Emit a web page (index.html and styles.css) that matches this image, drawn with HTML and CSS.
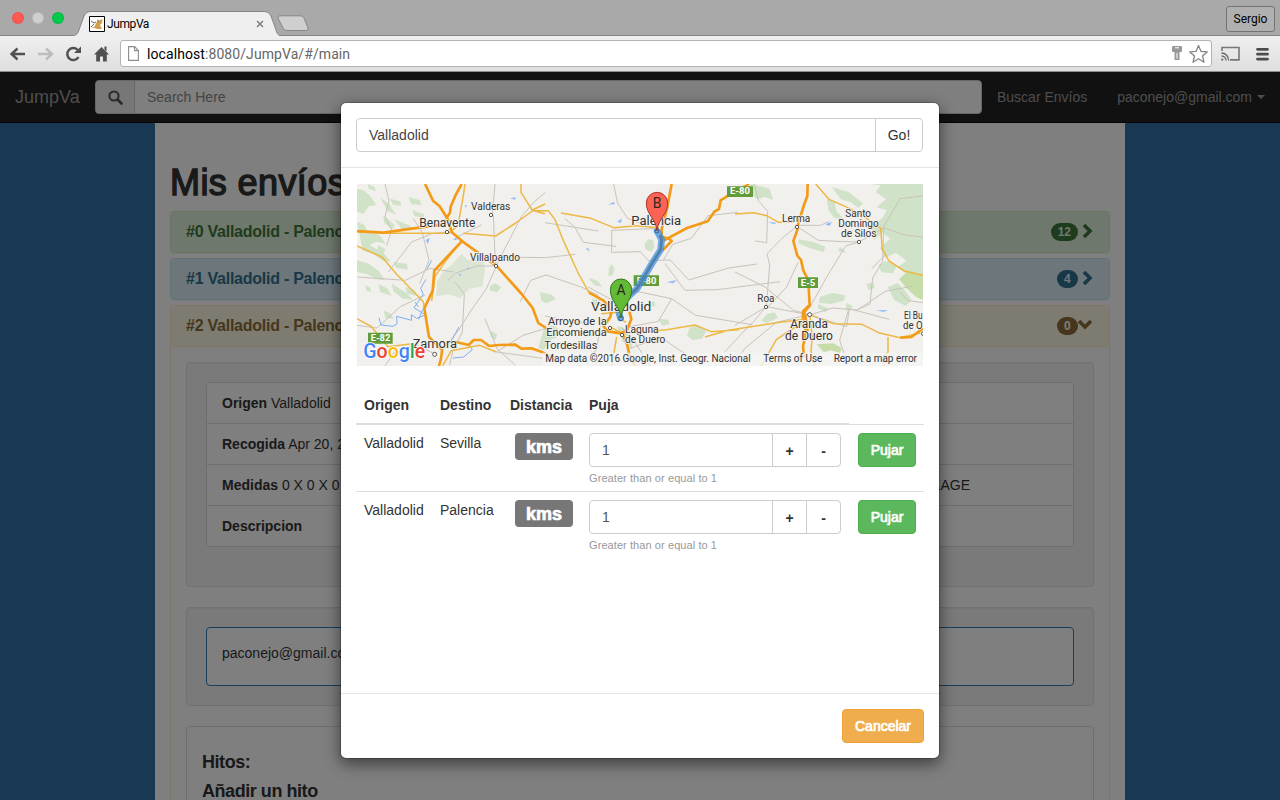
FILE: index.html
```html
<!DOCTYPE html>
<html lang="es">
<head>
<meta charset="utf-8">
<title>JumpVa</title>
<link rel="stylesheet" href="styles.css">
</head>
<body>
<header class="browser">
  <div class="tabstrip">
    <div class="lights"><i class="red"></i><i class="gray"></i><i class="green"></i></div>
    <div class="tab">
      <svg class="tab-shape" width="208" height="25" viewBox="0 0 208 25"><path d="M0 25C4 24 5 22 6 19L11 5Q13 .5 17 .5H192Q196 .5 198 5L203 19C204 23 205 24 208 25" fill="#efefef" stroke="#858585"/></svg>
      <div class="tab-content">
        <svg width="16" height="16" viewBox="0 0 16 16"><path fill="#fff" stroke="#000" d="M.5.5h15v15H.5z"/><path d="M3 12l3-2 1-3 1-1V3l2 1.500 3.500-1.500-.5 4-2 2 2 4H8l-2-1z" fill="#d2a04a"/><path d="M2 5l3 2 2-1M2 11l3-3M9 5.500h1" stroke="#69675c" fill="none"/></svg>
        <span>JumpVa</span>
        <svg class="close" width="8" height="8" viewBox="0 0 8 8"><path d="M1 1l6 6M7 1L1 7" stroke="#777" stroke-width="1.4"/></svg>
      </div>
    </div>
    <svg class="newtab" width="34" height="17" viewBox="0 0 34 17"><path d="M4 .8H24Q27 .8 28 3L32 13Q33 15.500 30 15.500H11Q8 15.500 7 13L2 3Q1.500 .8 4 .8z" fill="#cfcfcf" stroke="#878787"/></svg>
    <span class="user">Sergio</span>
  </div>
  <div class="toolbar">
    <svg class="tools" width="112" height="34" viewBox="0 0 112 34" fill="none">
      <path d="M25 17H12M17.500 11.500L11.500 17l6 5.500" stroke="#505050" stroke-width="2.400"/>
      <path d="M38 17h13M46 11.500l6 5.500-6 5.500" stroke="#bcbcbc" stroke-width="2.400"/>
      <path d="M78.500 20A6 6 0 1 1 77.500 12.800" stroke="#505050" stroke-width="2.500"/><path d="M81 9.500v6.500h-7z" fill="#505050"/>
      <path d="M94 17.500l7.500-7.500 7.500 7.500h-2.200v7h-3.800v-5h-3v5h-3.800v-7zM104.500 9.500h2v5l-2-2z" fill="#505050"/>
    </svg>
    <div class="address">
      <svg width="11" height="15" viewBox="0 0 11 15"><path d="M.6.6h6L10.400 4.500v9.900H.6zM6.500.6v4h3.900" fill="#fff" stroke="#8b8b8b" stroke-width="1.100"/></svg>
      <span class="url"><b>localhost</b>:8080/JumpVa/#/main</span>
      <svg class="right-icons" width="40" height="22" viewBox="0 0 40 22"><path d="M2 3h8q1 0 1 1v4q0 1-1 1H8.500v8h-5V9H2q-1 0-1-1V4q0-1 1-1z" fill="#999"/><path d="M4 4.800h4M6 10v5.500" stroke="#fff"/><path d="M27.500 2.500l2.500 5.900 6.200.5-4.700 4.100 1.500 6.200-5.500-3.400-5.500 3.400 1.500-6.200-4.700-4.100 6.200-.5z" fill="#fff" stroke="#858585" stroke-width="1.300" stroke-linejoin="round"/></svg>
    </div>
    <svg class="menu-icons" width="50" height="22" viewBox="0 0 50 22" fill="none"><path d="M2 8V4.500h17v12.400h-9" stroke="#777" stroke-width="1.600"/><path d="M1.500 10a7 7 0 0 1 7 7.500M1.500 13a4.500 4.500 0 0 1 4.500 4.500" stroke="#666" stroke-width="1.300"/><circle cx="2.300" cy="16.600" r="1.100" fill="#666"/><path d="M37.500 6.300h10M37.500 11.200h10M37.500 16.100h10" stroke="#4d4d4d" stroke-width="2.800" stroke-linecap="round"/></svg>
  </div>
</header>
<div class="viewport">
  <nav class="navbar">
    <span class="brand">JumpVa</span>
    <div class="search"><span class="addon"><svg width="15" height="15" viewBox="0 0 15 15" fill="none"><circle cx="6" cy="6" r="4.600" stroke="#555" stroke-width="2"/><path d="M9.500 9.500l4 4" stroke="#555" stroke-width="2.600" stroke-linecap="round"/></svg></span><span class="ph">Search Here</span></div>
    <span class="link1">Buscar Envíos</span>
    <span class="link2">paconejo@gmail.com<i class="caret"></i></span>
  </nav>
  <main class="container">
    <h1>Mis envíos</h1>
    <section class="panel success"><div class="heading"><span>#0 Valladolid - Palencia</span><span class="badge">12</span><svg width="14" height="14" viewBox="0 0 14 14"><path d="M3 1l6 6-6 6" fill="none" stroke="currentColor" stroke-width="3.600"/></svg></div></section>
    <section class="panel info"><div class="heading"><span>#1 Valladolid - Palencia</span><span class="badge">4</span><svg width="14" height="14" viewBox="0 0 14 14"><path d="M3 1l6 6-6 6" fill="none" stroke="currentColor" stroke-width="3.600"/></svg></div></section>
    <section class="panel warning">
      <div class="heading"><span>#2 Valladolid - Palencia</span><span class="badge flush">0</span><svg width="14" height="14" viewBox="0 0 14 14"><path d="M1 3l6 6 6-6" fill="none" stroke="currentColor" stroke-width="3.600"/></svg></div>
      <div class="panel-body">
        <div class="well first">
          <div class="list">
            <div><b>Origen</b> Valladolid</div>
            <div><b>Recogida</b> Apr 20, 2016</div>
            <div class="split"><span><b>Medidas</b> 0 X 0 X 0</span><span class="kind">PACKAGE</span></div>
            <div><b>Descripcion</b></div>
          </div>
        </div>
        <div class="well"><div class="mail">paconejo@gmail.com</div></div>
        <div class="hitos"><h4>Hitos:</h4><h4>Añadir un hito</h4></div>
      </div>
    </section>
  </main>
  <div class="backdrop"></div>
  <div class="modal">
    <div class="modal-header"><div class="group"><span class="field">Valladolid</span><span class="go">Go!</span></div></div>
    <div class="modal-body">
      <svg class="map" width="566" height="182" viewBox="6 6 1698 546">
        <path fill="#f1f0ed" d="M6 6h1698v546H6z"/>
        <g fill="#d0e2c7">
          <path d="M6 20l20 5 22 20 15 25-22 3-15 22-20-5zM6 120l22 8 10 20 35 12 20 25-30-6-20 10 40 22 25 28-28-4-22-18-35-12zM6 235l35 10 30 22 20 28-25-3-30-16-30-6zM38 6l20 8 5 14-22-8zM75 45l30 25 18 28-25-10zM105 50l30 8 4 14-25-4zM85 100l35 30-8 12-25-20zM118 112l45 18 12 14-35-3zM115 240l40 5 4 18-35-5zM70 305l28 15 12 22-34-12zM110 305l45 28 18 20-30-3-28-22zM150 315l28 10 12 18-32-8zM30 310l15 6 4 14-15-5zM85 385l20 8 12 18-25-4zM160 45l35 10 5 14-30-2zM172 85l35 12-2 12-28-8zM70 190l20 10-3 14-20-10z"/>
          <path d="M320 215l18 20 46-8 6 34-8 52-40 8-26 28-36-12-36 6 2-44 22-34 22-16z" fill="#dce4d3"/>
          <path d="M405 312l16-8 18 12-12 14-22-4zM555 330l35 8 12 14-28 12-15-8zM408 447l18 10-4 18-16-12z"/>
          <path d="M880 172l14 2 4 18-8 18-18-8-4-16zM700 288l28 8 14 18-24-4zM762 257l8-10 8 12-4 20-14 4zM778 295l18-3 14 16-18 24-12-12zM710 350l24 4 12 14-28 2zM845 285l20 5 14 14-26-2zM880 365l18-8 4 14-16 4zM565 445l25-15 20 8-4 28-28 10-10 28-18-5zM1005 435l25-5 24 18-14 22-28 4-16-14zM910 410l30 3 4 14-22 4zM785 432l20 6 30 40-6 24-28-25-4-22z"/>
          <path d="M1190 6l54 14 10 34-25-10-22 9-18-20-25-4 5-12zM1415 50l24 12 6 26 25 30-34-12-15-22zM1330 172l45 8 36 14-5 16-44-13-30-12zM1456 195l18 18-25-6zM1395 345l36-12 40 6-5 17-40 10-34-4zM1390 367l30 12-8 12-24-12zM1237 395l22-4 10 16-34 16-16-7zM1475 362l20 12-24 12z"/>
          <path d="M1548 6h156v300l-20-25-28-5-28-20 26-20-32-24-30 16-17-30 30-28-22-18-26 22-6-38 34-32 10-20-30-8 28-24-30-22 14-20zM1570 250l24-14 30 18-10 20-34-3zM1598 315l30-12 24 26 18 25-18 18-34-18z"/>
          <path d="M1430 15l50 15 44 34-14 14-24-18-28-8zM1535 305l20-3 5 15-20 8z"/>
          <path fill="#c6dda9" d="M1632 292l25-24 47 12v74l-20-8-30-28z"/><path fill="#c6dda9" d="M1385 487l50-3 25 15-5 14-28-8-20 6z"/>
        </g>
        <g stroke="#c9c3bb" stroke-width="3" fill="none" stroke-linejoin="round">
          <path d="M90 6l12 50-12 48 20 40-15 47M6 285l145 10 75-36 70 11M175 110l27 42 20 83-28 70M100 270l70-90 60-25 45-5M415 100l6 148M420 6l-8 88M425 252l-60 0-65 22-22 22M300 300l28 36-6 114-28 56-10 44M425 252l-32 70-44 62-38 60-42 55M240 516l-60-28-60 20-30 44M390 410l36 90 55 50M424 510l80-50 66-20M425 510l146 20M495 360l32-65 46-16M425 225l145 2M425 248l74-144 40-46 32-26M380 128l-76 38M6 430l60 8 70-64 74-35"/>
          <path d="M571 278l110 38 49 24M571 227l90-10M630 110l30 26 25 45 98 12M776 6l12 58 30 45 80 32M570 122l160 25M770 211l86-2 25 27 65-2 55 60 120-36 86-12M770 211v-66l125-5M925 235l28-48 56-18 50-68 90-10M930 245l60 80 96-2 190-24M740 410l-15 90-30 50M570 402l80 16 66 7M800 435l36 40 50 76M825 500l90-35 130 87M700 315l88 48M830 325l120 25 72 50 170 28M950 350l-40 68-92 17"/>
          <path d="M1198 6l12 50 28 32-3 94-34-5M1325 133l-44 36-45 46 8 34-10 124-40 48-30 30-56 60M1325 133l65 42 76 4 46 1 75-42 60 20 60 8M1512 180l-40 12-58 95-50 90M1330 240l-36 76-56 60M1235 374l130 25 66-21 76 6 84-56 80-15M1140 270l90 45 85 70 49 13M1140 430l95-56M1364 398l-100 23-94 78-36 51M1586 138l-3 100-30 50-8 78-40 18M1480 385l-26 90 20 60M1590 220l-40 40M1582 140l54-90 68-8M1634 330l26 26 44 6M1325 130h72l25-12M1365 399l110 35 8-54 120 32"/>
        </g>
        <g fill="none" stroke="#7faff5" stroke-width="3"><path d="M213 292l-16 27 8 18-28 40 34 22-26 10-16-11 1 17-45-12 1 23-12 7-36-4-6-22M230 235l-14 26M312 435l-24 42-16 15M338 485l14 18-26 22-32 3M180 360l10 15M203 382l-12 30"/></g>
        <g fill="#91baff"><path d="M212 174l12-6-5 18zM293 172l14-6-3 9zM330 68l6 3-4 7zM310 275l10 3-6 5zM336 258l8-1-5 7zM465 49l18-3-3 7zM692 200l8-2 4 10zM760 68l16-9 4 7zM787 118l14-8-4 14zM935 301l30-7-10 10zM1240 120l25 2-8 5zM1410 127l20-8-6 13zM1564 384l35 1-14 5z"/></g>
        <g fill="none" stroke="#edb844" stroke-width="4.500" stroke-linejoin="round">
          <path d="M6 150l95 4 180 0 28-24 16-90 5-34M6 192l75 33 44 52 80 82 3 20M325 154l97 8 60-39 50-36M498 6v25l34 54 38 10M532 84l38-18M6 410l42 23 51 61 67-8M424 510l-50-20-85 16-26 45M320 178l-45 55-35 50-10 74M532 86l48 0 20 27 26 65 45 98 31 56M618 93l90 16 68 28 66-6 70 6M765 435l40 20 130-12 84-14 50 20 82-6M739 395l60-5M785 465l-15 87M1050 465l70-20 160-25 71-8M813 421l-20-12-12-20"/>
          <path d="M1140 96l55-4 40 9 36 20h46M1382 6l40 46 50 22 48 25 57 40 5 62 20 36 46 30 56 13M1370 400l65 25 86 2 50 25 64 15 60-14M1599 465v46l-12 10v31M1358 415l-50 28-44 30-45 79M1364 398l8 68-4 40 10 46"/>
        </g>
        <g fill="none" stroke="#f39b18" stroke-width="8" stroke-linejoin="round">
          <path d="M6 147l80 5 90-13 76-10 27-19M210 6l24 50 20 17 24 38 12 39 32 28 104 75 74 83 33 42 17 45 34 22M320 6l-17 31-16 37-2 18-12 18M320 178l-82 88-5 60-25 53 14 86 38 37M303 480l38 9 15-15 22 0 25 18 28-3 50-1 18 12 30-1 34 12 30 15M262 500l-4 30-6 22"/>
          <path d="M950 6l-13 70-17 65 0 24 22 5 8 7-27 28M926 176l70-38 62-20 20-29 14-8 5-26 53-34 25-10 13-15M702 332l44 24 24 29-4 20-20 28 12 15 40 6 18-10 13-33-6-22M800 452l15 30 8 35 18 35"/>
          <path d="M1358 6l-1 36-10 27-18 58-3 20-11 30 12 44 11 13 7 31 15 30 4 76-17 20 5 15-2 61-6 25 3 34"/><path d="M1362 370l-18 18v20l11 19 3 20M1704 440l-35 25-33 2"/>
        </g>
        <g fill="#609d3a"><path d="M39 452h74v33H39zM836 280h76v32h-76zM1116 13h78v32h-78zM1329 286h60v32h-60z"/></g>
        <g fill="#fff" font-size="25" font-weight="700"><text x="47" y="478" textLength="59" lengthAdjust="spacingAndGlyphs">E-82</text><text x="845" y="305" textLength="59" lengthAdjust="spacingAndGlyphs">E-80</text><text x="1125" y="37" textLength="60" lengthAdjust="spacingAndGlyphs">E-80</text><text x="1337" y="311" textLength="44" lengthAdjust="spacingAndGlyphs">E-5</text></g>
        <path d="M906 147l14 25-3 31-27 43-43 73-26 24-24 20-6 24 5 21" fill="none" stroke="#3c8ee0" stroke-opacity=".72" stroke-width="20" stroke-linejoin="round" stroke-linecap="round"/>
        <path d="M914 160l6 12-3 31-27 43-43 73-26 24" fill="none" stroke="#547fab" stroke-width="8" stroke-linejoin="round"/>
        <g fill="#fff" stroke="#555" stroke-width="3"><circle cx="276" cy="150" r="5"/><circle cx="408" cy="99" r="5"/><circle cx="423" cy="252" r="5"/><circle cx="239" cy="517" r="6"/><circle cx="906" cy="147" r="6" fill="#6da9e5" stroke="#315f9a"/><circle cx="798" cy="409" r="7" fill="#6da9e5" stroke="#315f9a"/><circle cx="765" cy="438" r="5"/><circle cx="801" cy="459" r="5"/><circle cx="1326" cy="135" r="5"/><circle cx="1512" cy="180" r="5"/><circle cx="1233" cy="375" r="5"/><circle cx="1364" cy="398" r="6"/><circle cx="1704" cy="455" r="5"/></g>
        <g class="places">
          <text x="193" y="135" font-size="36" textLength="168" lengthAdjust="spacingAndGlyphs">Benavente</text><text x="348" y="83" textLength="118" lengthAdjust="spacingAndGlyphs">Valderas</text><text x="345" y="237" textLength="150" lengthAdjust="spacingAndGlyphs">Villalpando</text><text x="173" y="498" font-size="36" textLength="133" lengthAdjust="spacingAndGlyphs">Zamora</text>
          <text x="829" y="130" font-size="38" textLength="149" lengthAdjust="spacingAndGlyphs">Palencia</text><text x="708" y="388" font-size="38" textLength="181" lengthAdjust="spacingAndGlyphs">Valladolid</text><text x="579" y="430" textLength="176" lengthAdjust="spacingAndGlyphs">Arroyo de la</text><text x="574" y="463" textLength="181" lengthAdjust="spacingAndGlyphs">Encomienda</text><text x="568" y="502" textLength="159" lengthAdjust="spacingAndGlyphs">Tordesillas</text><text x="810" y="453" textLength="101" lengthAdjust="spacingAndGlyphs">Laguna</text><text x="810" y="483" textLength="121" lengthAdjust="spacingAndGlyphs">de Duero</text>
          <text x="1281" y="120" textLength="85" lengthAdjust="spacingAndGlyphs">Lerma</text><text x="1471" y="105" textLength="77" lengthAdjust="spacingAndGlyphs">Santo</text><text x="1450" y="136" textLength="121" lengthAdjust="spacingAndGlyphs">Domingo</text><text x="1458" y="166" textLength="106" lengthAdjust="spacingAndGlyphs">de Silos</text><text x="1207" y="361" textLength="51" lengthAdjust="spacingAndGlyphs">Roa</text><text x="1306" y="438" font-size="36" textLength="113" lengthAdjust="spacingAndGlyphs">Aranda</text><text x="1290" y="474" font-size="36" textLength="144" lengthAdjust="spacingAndGlyphs">de Duero</text><text x="1647" y="411" textLength="56" lengthAdjust="spacingAndGlyphs">El Bu</text><text x="1644" y="441" textLength="59" lengthAdjust="spacingAndGlyphs">de O</text>
        </g>
        <g stroke-width="3"><path d="M906 147C903 109 874 99 874 63a32 32 0 0 1 64 0C938 99 909 109 906 147z" fill="#fb6355" stroke="#a9372c"/><path d="M798 408C795 371 766 360 766 323a32 32 0 0 1 64 0C830 360 801 371 798 408z" fill="#62ba35" stroke="#397721"/></g>
        <g fill="#30291f" font-size="42" text-anchor="middle"><text x="906" y="78">B</text><text x="798" y="338">A</text></g>
        <path d="M562 512h1142v40H562z" fill="#f5f5f5" opacity=".78"/>
        <g fill="#333" font-size="30"><text x="571" y="540" textLength="616" lengthAdjust="spacingAndGlyphs">Map data ©2016 Google, Inst. Geogr. Nacional</text><text x="1225" y="540" textLength="177" lengthAdjust="spacingAndGlyphs">Terms of Use</text><text x="1436" y="540" textLength="250" lengthAdjust="spacingAndGlyphs">Report a map error</text></g>
        <text class="google" x="25" y="529" textLength="186" lengthAdjust="spacingAndGlyphs"><tspan fill="#4285f4">G</tspan><tspan fill="#ea4335">o</tspan><tspan fill="#fbbc05">o</tspan><tspan fill="#4285f4">g</tspan><tspan fill="#34a853">l</tspan><tspan fill="#ea4335">e</tspan></text>
      </svg>
      <div class="table">
        <div class="row head"><b>Origen</b><b>Destino</b><b>Distancia</b><b>Puja</b><b class="empty"></b></div>
        <div class="row"><span>Valladolid</span><span>Sevilla</span><span class="dist"><b class="kms">kms</b></span><div><div class="group"><span class="field">1</span><b class="step">+</b><b class="step">-</b></div><small>Greater than or equal to 1</small></div><div><span class="btn green-btn">Pujar</span></div></div>
        <div class="row"><span>Valladolid</span><span>Palencia</span><span class="dist"><b class="kms">kms</b></span><div><div class="group"><span class="field">1</span><b class="step">+</b><b class="step">-</b></div><small>Greater than or equal to 1</small></div><div><span class="btn green-btn">Pujar</span></div></div>
      </div>
    </div>
    <div class="modal-footer"><span class="btn cancel">Cancelar</span></div>
  </div>
</div>
</body>
</html>
```
FILE: styles.css
```css
* { box-sizing: border-box; }
body { margin: 0; width: 1280px; height: 800px; overflow: hidden; display: flex; flex-direction: column; font: 14px/20px "Liberation Sans", Arial, sans-serif; color: #333; }
svg { display: block; flex: none; }
.browser { height: 72px; flex: none; color: #000; border-bottom: 1px solid #8d8d8d; }
.tabstrip { height: 36px; background: #a9a9a9; border-bottom: 1px solid #858585; display: flex; align-items: flex-end; }
.lights { display: flex; gap: 8px; padding-left: 12px; height: 24px; width: 73px; }
.lights i { width: 12px; height: 12px; border-radius: 50%; margin-top: 1px; border: 1px solid rgba(0,0,0,.08); }
.red { background: #ff5a52; } .gray { background: #cfcfcf; } .green { background: #00ca4c; }
.tab { display: grid; width: 208px; margin-bottom: -1px; }
.tab > * { grid-area: 1 / 1; }
.tab-content { display: flex; align-items: center; padding: 0 17px 0 16px; height: 25px; font: 12px/16px Roboto, sans-serif; letter-spacing: -.4px; gap: 2px; }
.close { margin-left: auto; }
.newtab { margin: 0 0 3px -5px; }
.user { margin: 0 5px 3px auto; width: 49px; height: 26px; border: 1px solid #747474; border-radius: 3px; background: #b0b0b0; font: 12px/25px Roboto, sans-serif; text-align: center; }
.toolbar { height: 35px; background: linear-gradient(#f0f0f0, #dedede); display: flex; align-items: center; }
.tools { margin-right: 8px; }
.address { width: 1092px; height: 27px; border: 1px solid #b3b3b3; border-radius: 3px; background: #fff; display: flex; align-items: center; padding: 0 0 0 7px; }
.url { margin-left: 8px; font: 14px/20px Roboto, sans-serif; color: #666; letter-spacing: .08px; }
.url b { font-weight: 400; color: #000; }
.right-icons { margin-left: auto; }
.menu-icons { margin-left: 8px; }
.viewport { position: relative; flex: 1; min-height: 0; overflow: hidden; background: #3071a9; }
.navbar { height: 51px; background: #222; border-bottom: 1px solid #080808; display: flex; align-items: center; color: #9d9d9d; padding: 0 15px; }
.brand { font-size: 18px; width: 80px; }
.search { width: 887px; height: 34px; border: 1px solid #ccc; border-radius: 4px; background: #fff; display: flex; align-items: center; overflow: hidden; }
.addon { width: 39px; height: 34px; background: #eee; border-right: 1px solid #ccc; display: flex; align-items: center; justify-content: center; }
.ph { padding-left: 12px; color: #888; }
.link1 { width: 120px; padding-left: 15px; }
.link2 { margin-left: auto; display: flex; align-items: center; white-space: nowrap; }
.caret { margin-left: 5px; border: 4px solid transparent; border-top-color: #9d9d9d; border-bottom: 0; }
.container { width: 970px; height: 677px; margin: 0 auto; padding: 37px 15px 0; background: #fff; }
h1 { margin: 0 0 8px; padding-top: 2px; font-size: 36px; line-height: 41px; font-weight: 400; letter-spacing: .4px; -webkit-text-stroke: 1.4px #333; }
.panel { border: 1px solid; border-radius: 4px; margin-bottom: 5px; box-shadow: 0 1px 1px rgba(0,0,0,.05); }
.heading { height: 40px; padding: 0 15px; display: flex; align-items: center; font-size: 16px; font-weight: 700; letter-spacing: -.25px; border-radius: 3px; }
.heading svg { margin: 0 -1px 2px 3px; }
.badge { margin-left: auto; height: 18px; min-width: 21px; padding: 0 7px; border-radius: 10px; font-size: 12px; line-height: 18px; letter-spacing: 0; }
.heading .flush + svg { margin-left: 0; margin-right: 2px; }
.success { border-color: #d6e9c6; } .success .heading { background: #dff0d8; color: #3c763d; } .success .badge { background: #3c763d; color: #dff0d8; }
.info { border-color: #bce8f1; } .info .heading { background: #d9edf7; color: #31708f; } .info .badge { background: #31708f; color: #d9edf7; }
.warning { border-color: #faebcc; } .warning .heading { background: #fcf8e3; color: #8a6d3b; height: 41px; padding-bottom: 1px; border-bottom: 1px solid #faebcc; } .warning .badge { background: #8a6d3b; color: #fcf8e3; }
.panel-body { padding: 15px; }
.well { background: #f5f5f5; border: 1px solid #e3e3e3; border-radius: 4px; padding: 19px; margin-bottom: 20px; height: 99px; box-shadow: inset 0 1px 1px rgba(0,0,0,.05); }
.well.first { height: 225px; }
.list { border: 1px solid #ddd; border-radius: 4px; background: #fff; }
.list > div { height: 41px; padding: 10px 15px; border-bottom: 1px solid #ddd; }
.list > div:last-child { border-bottom: 0; height: 40px; }
.list .split { display: flex; justify-content: space-between; }
.kind { padding-right: 88px; }
.mail { border: 1px solid #337ab7; border-radius: 4px; background: #fff; padding: 15px; height: 59px; }
.hitos { border: 1px solid #ddd; border-radius: 4px; padding: 25px 15px; height: 120px; }
h4 { margin: 0 0 9px; font-size: 18px; line-height: 20px; letter-spacing: -.45px; }
.backdrop { position: absolute; inset: 0; background: rgba(0,0,0,.5); }
.modal { position: absolute; left: 340px; top: 30px; width: 600px; height: 657px; background: #fff; background-clip: padding-box; border: 1px solid rgba(0,0,0,.2); border-radius: 6px; box-shadow: 0 5px 15px rgba(0,0,0,.5); display: flex; flex-direction: column; }
.modal-header { padding: 15px; height: 65px; border-bottom: 1px solid #e5e5e5; }
.modal-header .group { width: 567px; }
.group { display: flex; height: 34px; border: 1px solid #ccc; border-radius: 4px; line-height: 32px; }
.field { flex: 1; padding-left: 12px; color: #555; }
.modal-header .field { color: #444; }
.go { width: 47px; border-left: 1px solid #ccc; text-align: center; }
.modal-body { flex: 1; padding: 16px 15px; }
.map { margin-left: 1px; font-family: Roboto, sans-serif; }
.places { font-size: 32px; fill: #333; stroke: #f4f2ef; stroke-width: 5px; paint-order: stroke; }
.google { font: 500 58px Roboto, sans-serif; stroke: #fff; stroke-width: 5px; paint-order: stroke; }
.table { margin-top: 21px; }
.row { display: grid; grid-template-columns: 76px 70px 79px 268px 75px; height: 66px; }
.row + .row + .row { border-top: 1px solid #ddd; height: 67px; }
.row > * { padding: 8px 0 0 8px; }
.row.head { height: 38px; }
.head > * { border-bottom: 2px solid #ddd; }
.head .empty { border-bottom: 0; box-shadow: inset 0 -1px #ddd; }
.row .dist { display: flex; justify-content: flex-end; padding-right: 8px; }
.kms { width: 58px; height: 27px; border-radius: 4px; background: #777; color: #fff; font-size: 18px; line-height: 28px; text-align: center; -webkit-text-stroke: .7px #fff; }
.row .group { width: 252px; }
.step { width: 34px; border-left: 1px solid #ccc; text-align: center; line-height: 34px; }
small { display: block; color: #999; font-size: 11px; line-height: 16px; margin-top: 3px; letter-spacing: .08px; }
.btn { display: block; height: 34px; border: 1px solid; border-radius: 4px; color: #fff; text-align: center; line-height: 32px; -webkit-text-stroke: .7px #fff; }
.green-btn { width: 58px; margin-left: 1px; background: #5cb85c; border-color: #4cae4c; }
.modal-footer { height: 65px; border-top: 1px solid #e5e5e5; padding: 15px; display: flex; justify-content: flex-end; }
.cancel { width: 82px; background: #f0ad4e; border-color: #eea236; }
```
